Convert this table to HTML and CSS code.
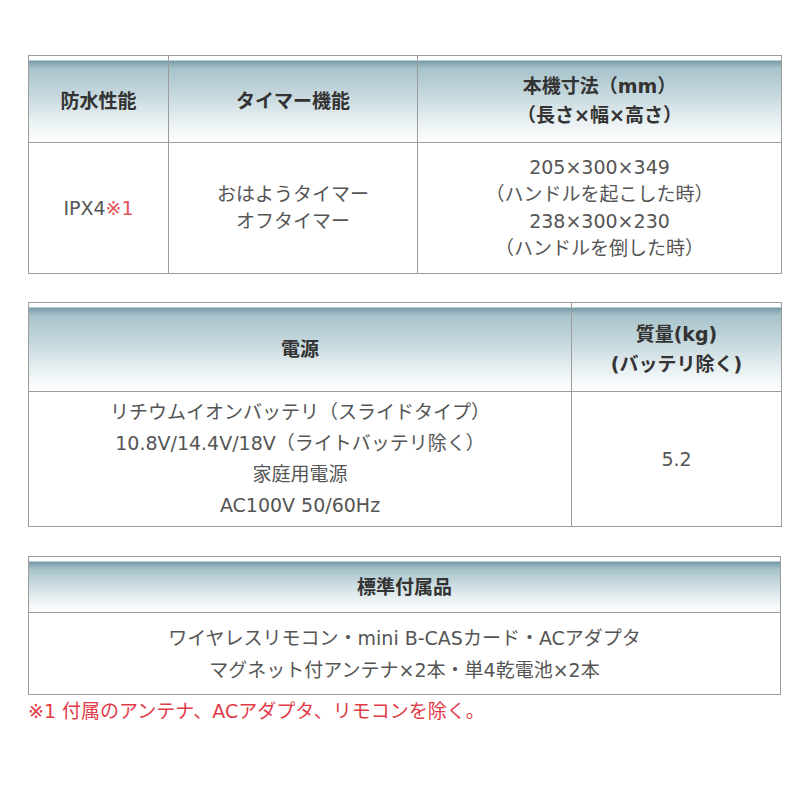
FILE: index.html
```html
<!DOCTYPE html>
<html lang="ja">
<head>
<meta charset="utf-8">
<title>仕様</title>
<link rel="stylesheet" href="styles.css">
</head>
<body>
<div class="page">
  <table class="spec spec-1">
    <colgroup><col class="c1a"><col class="c1b"><col class="c1c"></colgroup>
    <tr class="head">
      <th>防水性能</th>
      <th>タイマー機能</th>
      <th>本機寸法（mm）<br>（長さ×幅×高さ）</th>
    </tr>
    <tr class="body">
      <td>IPX4<span class="red">※1</span></td>
      <td>おはようタイマー<br>オフタイマー</td>
      <td>205×300×349<br>（ハンドルを起こした時）<br>238×300×230<br>（ハンドルを倒した時）</td>
    </tr>
  </table>

  <table class="spec spec-2">
    <colgroup><col class="c2a"><col class="c2b"></colgroup>
    <tr class="head">
      <th>電源</th>
      <th>質量(kg)<br>(バッテリ除く)</th>
    </tr>
    <tr class="body">
      <td>リチウムイオンバッテリ（スライドタイプ）<br>10.8V/14.4V/18V（ライトバッテリ除く）<br>家庭用電源<br>AC100V 50/60Hz</td>
      <td>5.2</td>
    </tr>
  </table>

  <table class="spec spec-3">
    <tr class="head">
      <th>標準付属品</th>
    </tr>
    <tr class="body">
      <td>ワイヤレスリモコン・mini B-CASカード・ACアダプタ<br>マグネット付アンテナ×2本・単4乾電池×2本</td>
    </tr>
  </table>

  <p class="note">※1 付属のアンテナ、ACアダプタ、リモコンを除く。</p>
</div>
</body>
</html>
```

FILE: styles.css
```css
html, body {
  margin: 0;
  padding: 0;
  background: #fff;
}

.page {
  padding: 55px 0 0 28px;
  width: 753px;
  font-family: "DejaVu Sans", "Noto Sans CJK JP", sans-serif;
  font-size: 19px;
  color: #555;
}

.spec {
  width: 753px;
  border-collapse: collapse;
  table-layout: fixed;
  border: 1px solid #9c9c9c;
}

.spec th,
.spec td {
  border: 1px solid #9c9c9c;
  text-align: center;
  vertical-align: middle;
  padding: 0;
}

.spec th {
  color: #333;
  font-weight: bold;
  background: linear-gradient(to bottom,
    #ffffff 0, #ffffff 4px,
    #6f98a5 4px, #86a9b4 7px,
    #a8c3cb 12px, #c6d8de 45%,
    #e8f0f2 75%, #ffffff 100%);
}

.spec td {
  background: #fff;
}

.c1a { width: 140px; }
.c1b { width: 249px; }
.c1c { width: 364px; }
.c2a { width: 543px; }
.c2b { width: 210px; }

.spec-1 .head th { height: 82px; line-height: 29px; padding-top: 4px; }
.spec-1 .body td { height: 130px; line-height: 27px; }

.spec-2 { margin-top: 28px; }
.spec-2 .head th { height: 84px; line-height: 30px; padding-top: 4px; }
.spec-2 .body td { height: 134px; line-height: 31px; }

.spec-3 { margin-top: 29px; }
.spec-3 .head th { height: 51px; line-height: 30px; padding-top: 4px; }
.spec-3 .body td { height: 81px; line-height: 32px; }

.red { color: #e4525c; }

.note {
  margin: 2px 0 0 0;
  color: #e23b48;
  line-height: 28px;
}
```
